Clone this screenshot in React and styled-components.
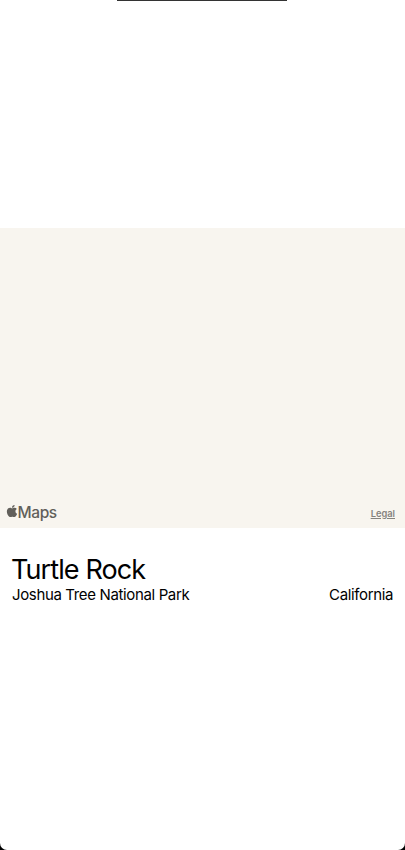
import styled, { createGlobalStyle } from "styled-components";
import { FaApple } from "react-icons/fa";

const GlobalStyle = createGlobalStyle`
  html, body {
    margin: 0;
    padding: 0;
    background: #000;
  }
`;

const App = () => {
  return (
    <>
      <GlobalStyle />
      <Screen>
        <Notch />
        <MapArea>
          <MapFooter>
            <MapsLogo>
              <FaApple size={14} />
              <span>Maps</span>
            </MapsLogo>
            <Legal>Legal</Legal>
          </MapFooter>
        </MapArea>
        <Details>
          <Title>Turtle Rock</Title>
          <Subtitle>
            <span>Joshua Tree National Park</span>
            <span>California</span>
          </Subtitle>
        </Details>
      </Screen>
    </>
  );
};

const Screen = styled.div`
  width: 405px;
  height: 850px;
  background: #fff;
  border-radius: 0 0 7px 7px;
  overflow: hidden;
  font-family: "Inter", "Liberation Sans", sans-serif;
  color: #000;
`;
const Notch = styled.div`
  width: 170px;
  height: 1px;
  margin: 0 118px 227px 117px;
  background: #333;
`;
const MapArea = styled.div`
  height: 300px;
  background: #f8f5ef;
  display: flex;
  flex-direction: column;
  justify-content: flex-end;
`;
const MapFooter = styled.div`
  display: flex;
  justify-content: space-between;
  align-items: center;
  padding: 0 10px 6px 5px;
  height: 20px;
  color: #615f5a;
`;
const MapsLogo = styled.div`
  display: flex;
  align-items: center;
  font-size: 15.5px;
  font-weight: 500;
  letter-spacing: -0.4px;

  svg {
    margin-top: -2px;
  }

  span {
    margin-left: -1.5px;
  }
`;
const Legal = styled.span`
  padding-top: 2px;
  font-size: 9.3px;
  font-weight: 600;
  text-decoration: underline;
  color: #85837e;
`;
const Details = styled.div`
  padding: 25px 12px 0;
`;
const Title = styled.h1`
  margin: 0 0 0 -1px;
  font-size: 27px;
  line-height: 33px;
  font-weight: 400;
  letter-spacing: -0.9px;
`;
const Subtitle = styled.div`
  display: flex;
  justify-content: space-between;
  font-size: 15px;
  line-height: 18px;
  letter-spacing: -0.36px;
`;

export default App;
